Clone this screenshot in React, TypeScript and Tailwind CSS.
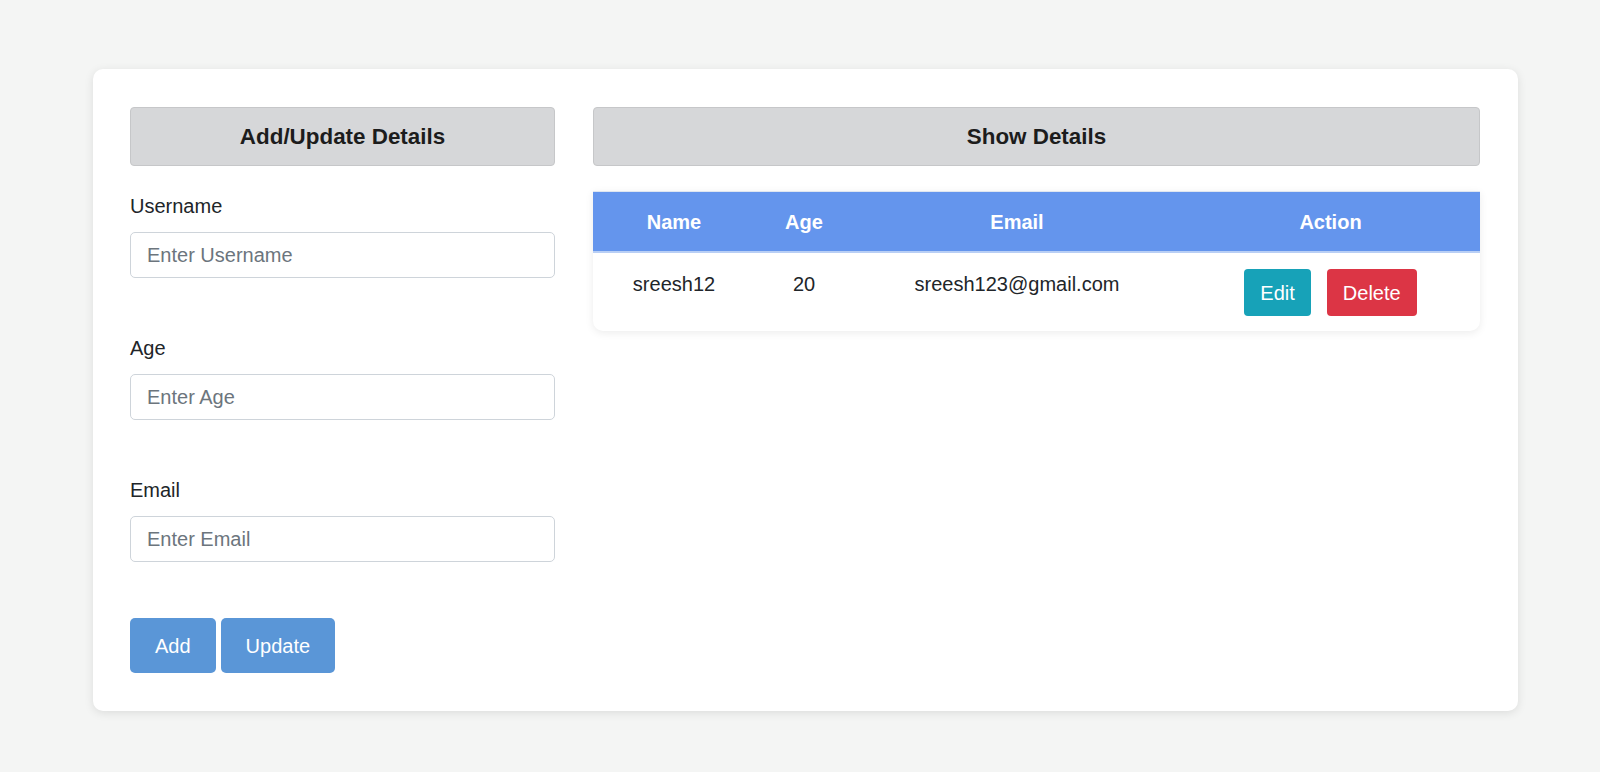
import React from "react";

type Row = { name: string; age: number; email: string };

const rows: Row[] = [{ name: "sreesh12", age: 20, email: "sreesh123@gmail.com" }];

function Field({ label, placeholder }: { label: string; placeholder: string }) {
  return (
    <div className="mb-[58px]">
      <label className="block text-[20px] leading-6 text-[#212529] mb-[14px]">{label}</label>
      <input
        placeholder={placeholder}
        className="block w-full h-[46px] px-4 text-[20px] text-[#212529] placeholder:text-[#6c757d] bg-white border border-[#ced4da] rounded-[5px] outline-none"
      />
    </div>
  );
}

export default function App() {
  return (
    <div className="min-h-[772px] bg-[#f4f5f4] pt-[69px] font-['Liberation_Sans',Arial,sans-serif]">
      <div className="ml-[93px] w-[1425px] bg-white rounded-[10px] shadow-[0_2px_10px_rgba(0,0,0,0.1)] p-[38px] pl-[37px] flex gap-[38px]">
        <div className="w-[425px] shrink-0">
          <div className="h-[59px] flex items-center justify-center bg-[#d6d7d9] border border-[#c6c7c9] rounded-[4px] mb-[28px]">
            <h2 className="text-[22.4px] font-bold text-[#1c1c1c]">Add/Update Details</h2>
          </div>
          <Field label="Username" placeholder="Enter Username" />
          <Field label="Age" placeholder="Enter Age" />
          <Field label="Email" placeholder="Enter Email" />
          <div className="flex gap-[5px] -mt-[2px]">
            <button className="h-[55px] px-[25px] bg-[#5a96d7] text-white text-[20px] rounded-[5px]">Add</button>
            <button className="h-[55px] px-[25px] bg-[#5a96d7] text-white text-[20px] rounded-[5px]">Update</button>
          </div>
        </div>

        <div className="flex-1">
          <div className="h-[59px] flex items-center justify-center bg-[#d6d7d9] border border-[#c6c7c9] rounded-[4px] mb-[25px]">
            <h2 className="text-[22.4px] font-bold text-[#1c1c1c]">Show Details</h2>
          </div>
          <div className="bg-white rounded-b-[10px] shadow-[0_2px_8px_rgba(0,0,0,0.08)] border-t border-[#dfe6f0]">
            <table className="w-full table-fixed border-collapse">
              <colgroup>
                <col className="w-[162px]" />
                <col className="w-[98px]" />
                <col className="w-[328px]" />
                <col className="w-[299px]" />
              </colgroup>
              <thead>
                <tr className="bg-[#6495ed] border-b-2 border-[#b9cff5]">
                  {["Name", "Age", "Email", "Action"].map((h) => (
                    <th key={h} className="h-[60px] text-center text-[20px] font-bold text-white">
                      {h}
                    </th>
                  ))}
                </tr>
              </thead>
              <tbody>
                {rows.map((r) => (
                  <tr key={r.name}>
                    <td className="align-top pt-[16px] text-center text-[20px] leading-[30px] text-[#212529]">{r.name}</td>
                    <td className="align-top pt-[16px] text-center text-[20px] leading-[30px] text-[#212529]">{r.age}</td>
                    <td className="align-top pt-[16px] text-center text-[20px] leading-[30px] text-[#212529]">{r.email}</td>
                    <td className="pt-[16px] pb-[15px]">
                      <div className="flex justify-center gap-4">
                        <button className="h-[47px] px-4 bg-[#17a2b8] text-white text-[20px] rounded-[4px]">Edit</button>
                        <button className="h-[47px] px-4 bg-[#dc3545] text-white text-[20px] rounded-[4px]">Delete</button>
                      </div>
                    </td>
                  </tr>
                ))}
              </tbody>
            </table>
          </div>
        </div>
      </div>
    </div>
  );
}
